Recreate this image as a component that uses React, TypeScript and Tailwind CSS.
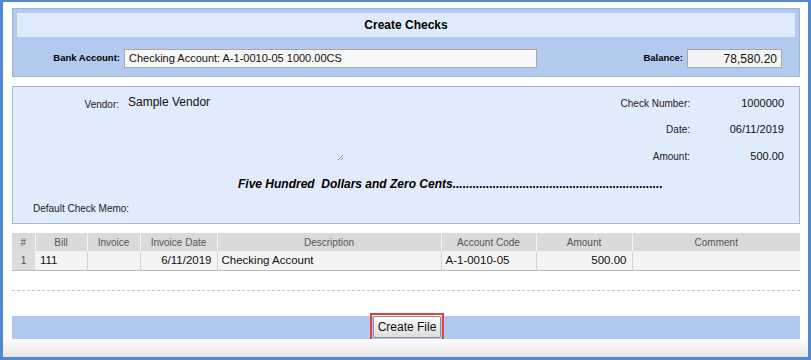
import React from "react";

const font = { fontFamily: '"Liberation Sans", Arial, sans-serif' };

function Th({ children, w }: { children?: React.ReactNode; w: string }) {
  return (
    <th className={`${w} h-[18px] p-0 text-[10px] font-normal text-[#555] text-center border-r border-[#f4f4f4] last:border-r-0`}>
      {children}
    </th>
  );
}

export default function App() {
  return (
    <div style={font} className="w-[811px] h-[360px] bg-white border-t-2 border-l-[3px] border-r-[3px] border-b-[3px] border-[#4f89d6] flex flex-col text-[#111]">
      <div className="flex flex-col pl-[9px] pr-[8px] pt-[6px] flex-1">
        {/* Header panel */}
        <div className="h-[69px] bg-[#b2caee] border border-[#9db4d8] px-[4px] pt-[4px] flex flex-col">
          <div className="h-[24px] bg-[#dfeafc] flex items-center justify-center text-[12px] font-bold text-black">
            Create Checks
          </div>
          <div className="flex items-center mt-[12px] -ml-[4px] -mr-[4px]">
            <div className="w-[107px] text-right text-[9.5px] font-bold text-black">Bank Account:</div>
            <div className="ml-[4px] w-[413px] h-[19px] bg-[#f7f7f7] border border-[#a8a8a8] text-[11px] pl-[4px] flex items-center text-[#111]">
              Checking Account: A-1-0010-05 1000.00CS
            </div>
            <div className="flex-1" />
            <div className="text-[9.5px] font-bold text-black">Balance:</div>
            <div className="ml-[4px] w-[95px] h-[19px] bg-[#f4f4f4] border border-[#a8a8a8] text-[12px] pr-[4px] flex items-center justify-end mr-[17px]">
              78,580.20
            </div>
          </div>
        </div>

        {/* Vendor panel */}
        <div className="mt-[9px] h-[138px] bg-[#e0ebfc] border border-[#aab6c8] flex flex-col">
          <div className="flex items-start mt-[8px] h-[69px]">
            <div className="w-[106px] text-right text-[10px] text-[#222] pt-[2px] leading-[15px]">Vendor:</div>
            <div className="relative ml-[6px] w-[221px] h-[69px] pl-[3px] text-[12px] leading-[15px] text-[#111]">
              Sample Vendor
              <svg className="absolute right-[2px] bottom-[3px]" width="7" height="7" viewBox="0 0 7 7">
                <line x1="1" y1="6" x2="6" y2="1" stroke="#888" strokeWidth="0.9" />
                <line x1="4" y1="6" x2="6" y2="4" stroke="#888" strokeWidth="0.9" />
              </svg>
            </div>
            <div className="flex-1" />
            <div className="flex flex-col mr-[15px] -mt-[5px]">
              <div className="flex items-center h-[26px]">
                <div className="w-[100px] text-right text-[10px] text-[#222]">Check Number:</div>
                <div className="w-[94px] text-right text-[11px]">1000000</div>
              </div>
              <div className="flex items-center h-[27px]">
                <div className="w-[100px] text-right text-[10px] text-[#222]">Date:</div>
                <div className="w-[94px] text-right text-[11px]">06/11/2019</div>
              </div>
              <div className="flex items-center h-[26px]">
                <div className="w-[100px] text-right text-[10px] text-[#222]">Amount:</div>
                <div className="w-[94px] text-right text-[11px]">500.00</div>
              </div>
            </div>
          </div>
          <div className="mt-[12px] ml-[225px] text-[12px] leading-[16px] font-bold italic text-black whitespace-pre">
            Five Hundred  Dollars and Zero Cents...............................................................
          </div>
          <div className="mt-[9px] ml-[20px] text-[10px] leading-[15px] text-[#222]">Default Check Memo:</div>
        </div>

        {/* Table */}
        <table className="mt-[9px] w-[788px] border-collapse table-fixed">
          <thead>
            <tr className="bg-[#dadada]">
              <Th w="w-[23px]">#</Th>
              <Th w="w-[52px]">Bill</Th>
              <Th w="w-[53px]">Invoice</Th>
              <Th w="w-[77px]">Invoice Date</Th>
              <Th w="w-[224px]">Description</Th>
              <Th w="w-[95px]">Account Code</Th>
              <Th w="w-[96px]">Amount</Th>
              <Th w="w-[168px]">Comment</Th>
            </tr>
          </thead>
          <tbody>
            <tr className="h-[19px] bg-[#f4f4f4] border-b border-[#bcbcbc] text-[11.5px]">
              <td className="p-0 bg-[#dcdcdc] text-center text-[10px] text-[#555]">1</td>
              <td className="p-0 pl-[5px] border-r border-[#d4d4d4]">111</td>
              <td className="p-0 border-r border-[#d4d4d4]"></td>
              <td className="p-0 pr-[5px] text-right border-r border-[#d4d4d4]">6/11/2019</td>
              <td className="p-0 pl-[4px] border-r border-[#d4d4d4]">Checking Account</td>
              <td className="p-0 pl-[4px] border-r border-[#d4d4d4]">A-1-0010-05</td>
              <td className="p-0 pr-[5px] text-right border-r border-[#d4d4d4]">500.00</td>
              <td className="p-0"></td>
            </tr>
          </tbody>
        </table>

        <div className="mt-[19px] h-0 border-t border-dashed border-[#c4c4c4] w-[788px]" />

        {/* Toolbar */}
        <div className="mt-[25px] h-[23px] w-[788px] bg-[#b1c9ee] flex items-center justify-center">
          <div className="h-[28px] w-[74px] border-2 border-[#e0413c] p-[1px] ml-[2px] shrink-0 flex">
            <button className="h-full w-full text-[12px] text-[#111] border border-[#8d8d8d] bg-gradient-to-b from-[#fafafa] to-[#dedede] rounded-[2px] flex items-center justify-center">
              Create File
            </button>
          </div>
        </div>
      </div>
      <div className="h-[18px] bg-gradient-to-b from-[#fdfdfd] to-[#e6e6e6]" />
    </div>
  );
}
